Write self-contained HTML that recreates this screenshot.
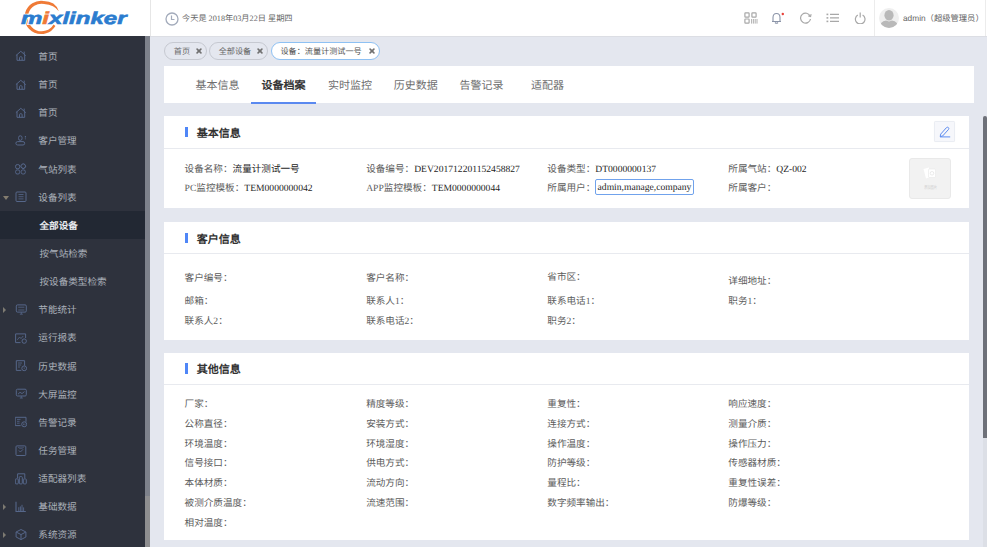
<!DOCTYPE html><html lang="zh-CN"><head><meta charset="utf-8"><style>
*{margin:0;padding:0;box-sizing:border-box}
html,body{width:987px;height:547px;overflow:hidden;background:#e4e7ef;font-family:"Liberation Serif", serif;text-rendering:geometricPrecision}
.a{position:absolute}
.t{position:absolute;white-space:nowrap;line-height:12px}
.side{position:absolute;left:0;top:36px;width:150px;height:511px;background:#2e323d}
.mi{position:absolute;left:0;width:145px;height:28.13px}
.mt{position:absolute;left:38.3px;top:9.5px;font-size:9.6px;line-height:12px;color:#aab0b9;white-space:nowrap}
.ic{position:absolute;left:15.3px;top:8px;width:12px;height:12px}
.arr{position:absolute;left:3px;top:10.5px;width:0;height:0}
.card{position:absolute;left:164px;width:805px;background:#fff}
.ch{position:absolute;left:0;top:0;width:100%;height:32px;border-bottom:1px solid #e8eaef}
.bar{position:absolute;left:21px;top:10.8px;width:3px;height:10.4px;background:#4f86f7}
.ct{position:absolute;left:32.7px;top:11.9px;font-size:11px;line-height:12px;font-weight:bold;color:#333;white-space:nowrap}
.lb{position:absolute;font-size:9.6px;line-height:12px;color:#5c5c5c;white-space:nowrap}
.lb b{font-weight:normal;color:#262626}
.tab{position:absolute;top:79.6px;font-size:11px;line-height:12px;color:#6e6e6e;white-space:nowrap}
.pill{position:absolute;top:41.6px;height:18.3px;border:1px solid #c6c9d1;border-radius:9.5px;font-family:"Liberation Sans", sans-serif;}
.pt{position:absolute;top:3px;font-size:8.15px;line-height:11px;color:#666;white-space:nowrap}
.px{position:absolute;top:3px;font-size:7.6px;line-height:11px;color:#777;font-weight:bold}
</style></head><body>
<div class="a" style="left:0;top:0;width:150px;height:36px;background:#fff"></div>
<svg class="a" style="left:0;top:0" width="150" height="36" viewBox="0 0 150 36">
<path d="M43.9 1.1 A16.6 16.6 0 1 0 55.4 25.9 L53.5 24.5 A13.8 13.8 0 1 1 44 3.9 Z" fill="#ef7a36"/>
<path d="M43.5 1.1 Q55.5 1.2 58.8 11.2 Q54.5 4.8 44 3.9 Z" fill="#ef7a36"/>
<g transform="translate(21,23.6) scale(1,0.86)">
<text x="0" y="0" font-family="Liberation Sans" font-weight="bold" font-style="italic" font-size="20" fill="#fff" stroke="#fff" stroke-width="2.6" textLength="105.5" lengthAdjust="spacingAndGlyphs">mixlinker</text>
<text x="0" y="0" font-family="Liberation Sans" font-weight="bold" font-style="italic" font-size="20" fill="#2b7ccf" stroke="#2b7ccf" stroke-width="0.7" textLength="105.5" lengthAdjust="spacingAndGlyphs">m<tspan fill="#ef7a36" stroke="#ef7a36">i</tspan>xlinker</text>
</g>
</svg>
<div class="side"></div>
<div class="a" style="left:145px;top:36px;width:5px;height:460px;background:#7d818b"></div>
<div class="a" style="left:145px;top:496px;width:5px;height:51px;background:#8e8e90"></div>
<div class="mi" style="top:42.40px;">
<svg class="ic" viewBox="0 0 12 12"><path d="M0.9 5.6 L5.8 1.3 L10.7 5.6 M9.2 1.6 V3.9 M2 4.7 V10.3 H9.7 V4.7 M4.5 10.3 V7.6 Q4.5 6.7 5.8 6.7 Q7.1 6.7 7.1 7.6 V10.3" fill="none" stroke="#56678a" stroke-width="1"/></svg>
<div class="mt" style="">首页</div>
</div>
<div class="mi" style="top:70.55px;">
<svg class="ic" viewBox="0 0 12 12"><path d="M0.9 5.6 L5.8 1.3 L10.7 5.6 M9.2 1.6 V3.9 M2 4.7 V10.3 H9.7 V4.7 M4.5 10.3 V7.6 Q4.5 6.7 5.8 6.7 Q7.1 6.7 7.1 7.6 V10.3" fill="none" stroke="#56678a" stroke-width="1"/></svg>
<div class="mt" style="">首页</div>
</div>
<div class="mi" style="top:98.70px;">
<svg class="ic" viewBox="0 0 12 12"><path d="M0.9 5.6 L5.8 1.3 L10.7 5.6 M9.2 1.6 V3.9 M2 4.7 V10.3 H9.7 V4.7 M4.5 10.3 V7.6 Q4.5 6.7 5.8 6.7 Q7.1 6.7 7.1 7.6 V10.3" fill="none" stroke="#56678a" stroke-width="1"/></svg>
<div class="mt" style="">首页</div>
</div>
<div class="mi" style="top:126.85px;">
<svg class="ic" viewBox="0 0 12 12"><rect x="3.6" y="0.8" width="3.4" height="4.6" rx="1.7" fill="none" stroke="#56678a"/><rect x="0.9" y="6.6" width="8.8" height="3.4" rx="1.7" fill="none" stroke="#56678a"/><path d="M10.4 1 V4.6" stroke="#56678a" stroke-width="1.1" stroke-dasharray="1 0.6"/></svg>
<div class="mt" style="">客户管理</div>
</div>
<div class="mi" style="top:155.00px;">
<svg class="ic" viewBox="0 0 12 12"><rect x="0.6" y="1.6" width="4.1" height="4.1" rx="1.6" fill="none" stroke="#56678a"/><rect x="6.2" y="1.1" width="4.1" height="4.1" rx="1.3" fill="none" stroke="#56678a" transform="rotate(45 8.25 3.15)"/><rect x="0.6" y="6.9" width="4.1" height="4.1" rx="1.6" fill="none" stroke="#56678a"/><rect x="6.2" y="6.9" width="4.1" height="4.1" rx="1.6" fill="none" stroke="#56678a"/></svg>
<div class="mt" style="">气站列表</div>
</div>
<div class="mi" style="top:183.15px;">
<svg class="ic" viewBox="0 0 12 12"><rect x="1" y="1" width="10" height="9.5" rx="1" fill="none" stroke="#56678a"/><path d="M3.5 3.5 H8.5 M3.5 5.7 H8.5 M3.5 7.9 H8.5" stroke="#56678a" stroke-width="0.8"/></svg>
<div class="arr" style="left:2.5px;top:13px;border-left:3.5px solid transparent;border-right:3.5px solid transparent;border-top:4px solid #837c6f"></div>
<div class="mt" style="">设备列表</div>
</div>
<div class="mi" style="top:211.30px;background:#222833;">
<div class="mt" style="color:#e9ebef;font-weight:bold;left:39.5px">全部设备</div>
</div>
<div class="mi" style="top:239.45px;">
<div class="mt" style="left:39.5px">按气站检索</div>
</div>
<div class="mi" style="top:267.60px;">
<div class="mt" style="left:39.5px">按设备类型检索</div>
</div>
<div class="mi" style="top:295.75px;">
<svg class="ic" viewBox="0 0 12 12"><rect x="1.3" y="0.9" width="10" height="7.2" rx="1.2" fill="none" stroke="#56678a"/><path d="M3.2 3.2 H9.4 M3.2 6 H9.4 M6.3 8.2 V10 M4.8 10.2 H7.8" fill="none" stroke="#56678a" stroke-width="0.8"/></svg>
<div class="arr" style="left:3px;top:11.3px;border-top:3.5px solid transparent;border-bottom:3.5px solid transparent;border-left:3.8px solid #7d7a72"></div>
<div class="mt" style="">节能统计</div>
</div>
<div class="mi" style="top:323.90px;">
<svg class="ic" viewBox="0 0 12 12"><path d="M5.5 10.6 H0.6 V1.9 H10.6 V6" fill="none" stroke="#56678a"/><path d="M2.3 7.8 L4.6 5 L6 6.6 L8.2 4" fill="none" stroke="#56678a" stroke-width="0.8"/><circle cx="9.2" cy="9.1" r="2.2" fill="none" stroke="#56678a"/></svg>
<div class="mt" style="">运行报表</div>
</div>
<div class="mi" style="top:352.05px;">
<svg class="ic" viewBox="0 0 12 12"><path d="M6.3 10.4 H1.3 V0.7 H9.6 V5.6" fill="none" stroke="#56678a"/><path d="M3 3 H7 M3 5 H6.2 M3 7 H5" stroke="#56678a" stroke-width="0.8"/><circle cx="9.2" cy="8.3" r="2.4" fill="none" stroke="#56678a"/><path d="M9.2 7.4 V8.9" stroke="#56678a" stroke-width="0.8"/></svg>
<div class="mt" style="">历史数据</div>
</div>
<div class="mi" style="top:380.20px;">
<svg class="ic" viewBox="0 0 12 12"><rect x="1.3" y="1.2" width="10" height="6.8" rx="1.2" fill="none" stroke="#56678a"/><path d="M3 6.2 L5 4.3 L7 5.6 L9.5 3.6 M6.3 8.2 V9.8 M4.8 10 H7.8" fill="none" stroke="#56678a" stroke-width="0.9"/></svg>
<div class="mt" style="">大屏监控</div>
</div>
<div class="mi" style="top:408.35px;">
<svg class="ic" viewBox="0 0 12 12"><path d="M5.6 9.6 H0.2 V1.3 H11 V5.8" fill="none" stroke="#56678a"/><path d="M2 3.4 H5.5 M2 5.3 H4.6 M2 7.2 H4.6" stroke="#56678a" stroke-width="0.8"/><circle cx="9.2" cy="8.3" r="2.5" fill="none" stroke="#56678a"/><path d="M8.5 7.5 V9.1 M9.9 7.5 V9.1" stroke="#56678a" stroke-width="0.7"/></svg>
<div class="mt" style="">告警记录</div>
</div>
<div class="mi" style="top:436.50px;">
<svg class="ic" viewBox="0 0 12 12"><rect x="1" y="0.9" width="9.8" height="9.6" rx="0.9" fill="none" stroke="#56678a"/><path d="M3.4 2.2 L4.2 3.1 H7.6 L8.4 2.2 M3.9 5.5 L5.4 7 L8.1 4.3" fill="none" stroke="#56678a" stroke-width="0.9"/></svg>
<div class="mt" style="">任务管理</div>
</div>
<div class="mi" style="top:464.65px;">
<svg class="ic" viewBox="0 0 12 12"><path d="M2.6 5.2 V0.8 H9.8 V5.2" fill="none" stroke="#56678a"/><rect x="0.3" y="5.9" width="3" height="5" rx="0.8" fill="none" stroke="#56678a"/><rect x="4.3" y="3.6" width="3" height="7.3" rx="0.8" fill="none" stroke="#56678a"/><rect x="8.3" y="5.9" width="3" height="5" rx="0.8" fill="none" stroke="#56678a"/></svg>
<div class="mt" style="">适配器列表</div>
</div>
<div class="mi" style="top:492.80px;">
<svg class="ic" viewBox="0 0 12 12"><path d="M1 0.7 V10.5 H10.8" fill="none" stroke="#56678a" stroke-width="1.1"/><path d="M3.8 10 V6.2 M5.4 10 V5.4 M7 10 V3.8 M8.6 10 V6.4" fill="none" stroke="#56678a" stroke-width="0.9"/></svg>
<div class="arr" style="left:3px;top:11.3px;border-top:3.5px solid transparent;border-bottom:3.5px solid transparent;border-left:3.8px solid #7d7a72"></div>
<div class="mt" style="">基础数据</div>
</div>
<div class="mi" style="top:520.95px;">
<svg class="ic" viewBox="0 0 12 12"><path d="M6 0.5 L10.9 3 V8 L6 10.6 L1.1 8 V3 Z M1.3 3.1 L6 5.6 L10.7 3.1 M6 5.6 V10.4" fill="none" stroke="#56678a" stroke-width="1"/></svg>
<div class="arr" style="left:3px;top:11.3px;border-top:3.5px solid transparent;border-bottom:3.5px solid transparent;border-left:3.8px solid #7d7a72"></div>
<div class="mt" style="">系统资源</div>
</div>
<div class="a" style="left:150px;top:0;width:837px;height:36px;background:#fff;border-left:1px solid #e6e6e6"></div><div class="a" style="left:150px;top:36px;width:837px;height:1px;background:#dcdee4"></div>
<svg class="a" style="left:164.6px;top:11.6px" width="14" height="14" viewBox="0 0 14 14"><circle cx="7" cy="7" r="6" fill="none" stroke="#a3abbb" stroke-width="1.3"/><path d="M6.5 3.5 V7.5 H9.5" fill="none" stroke="#a3abbb" stroke-width="1.2"/></svg>
<div class="t" style="left:182px;top:12.8px;font-size:8.2px;line-height:12px;color:#666">今天是 2018年03月22日 星期四</div>
<svg class="a" style="left:744px;top:12px" width="14" height="12" viewBox="0 0 14 12"><rect x="0.9" y="0.9" width="4.2" height="4.2" rx="0.6" fill="none" stroke="#a8a8a8" stroke-width="1.2"/><rect x="7.9" y="0.9" width="4.2" height="4.2" rx="0.6" fill="none" stroke="#a8a8a8" stroke-width="1.2"/><rect x="0.9" y="7" width="4.2" height="4.2" rx="0.6" fill="none" stroke="#a8a8a8" stroke-width="1.2"/><path d="M7.6 7 V11.6 M9.4 7 V11.6 M11.2 7 V11.6 M13 7 V11.6" stroke="#a8a8a8" stroke-width="0.9"/></svg>
<svg class="a" style="left:770px;top:12px" width="15" height="12" viewBox="0 0 15 12"><path d="M2 9.5 H11 M3 9.5 V5.5 Q3 1.5 6.5 1.5 Q10 1.5 10 5.5 V9.5 M5 10.5 Q6.5 12 8 10.5" fill="none" stroke="#8b94a8" stroke-width="1.1"/><circle cx="12.8" cy="2" r="1.2" fill="#e8413a"/></svg>
<svg class="a" style="left:799px;top:12px" width="14" height="12" viewBox="0 0 14 12"><path d="M11.2 4.2 A5 5 0 1 0 11.5 7" fill="none" stroke="#a8a8a8" stroke-width="1.2"/><path d="M9.3 3.9 L11.6 4.6 L12.1 2.1" fill="none" stroke="#a8a8a8" stroke-width="1.1"/></svg>
<svg class="a" style="left:826px;top:13px" width="14" height="10" viewBox="0 0 14 10"><rect x="0.5" y="0.6" width="1.8" height="1.6" fill="#a8a8a8"/><rect x="0.5" y="4.1" width="1.8" height="1.6" fill="#a8a8a8"/><rect x="0.5" y="7.6" width="1.8" height="1.6" fill="#a8a8a8"/><path d="M4 1.4 H13 M4 4.9 H13 M4 8.4 H13" stroke="#a8a8a8" stroke-width="1.3"/></svg>
<svg class="a" style="left:854px;top:12px" width="13" height="12" viewBox="0 0 13 12"><path d="M3.8 3 A4.8 4.8 0 1 0 8.6 3" fill="none" stroke="#a8a8a8" stroke-width="1.2"/><path d="M6.2 0.5 V5.5" stroke="#a8a8a8" stroke-width="1.2"/></svg>
<div class="a" style="left:874px;top:0;width:1px;height:36px;background:#ececec"></div>
<div class="a" style="left:985px;top:0;width:1px;height:36px;background:#ececec"></div>
<svg class="a" style="left:879px;top:8px" width="20" height="20" viewBox="0 0 20 20"><defs><clipPath id="cc"><circle cx="10" cy="10" r="10"/></clipPath></defs><circle cx="10" cy="10" r="10" fill="#efefef"/><g clip-path="url(#cc)" fill="#b9b9b9"><ellipse cx="10" cy="7.3" rx="4.6" ry="5.3"/><path d="M0.5 20 Q1 13.2 7 12.4 L10 13.5 L13 12.4 Q19 13.2 19.5 20 Z"/></g></svg>
<div class="t" style="left:903px;top:12px;font-family:'Liberation Sans',sans-serif;font-size:8.3px;line-height:12px;color:#666">admin（超级管理员）</div>
<div class="pill" style="left:164.3px;width:42.3px"><span class="pt" style="left:8.5px">首页</span><svg class="a" style="left:30.6px;top:5.6px" width="6" height="6" viewBox="0 0 6 6"><path d="M1.1 1.1 L4.9 4.9 M4.9 1.1 L1.1 4.9" stroke="#707070" stroke-width="1.6" stroke-linecap="round"/></svg></div>
<div class="pill" style="left:209.2px;width:59px"><span class="pt" style="left:8.5px">全部设备</span><svg class="a" style="left:47.1px;top:5.6px" width="6" height="6" viewBox="0 0 6 6"><path d="M1.1 1.1 L4.9 4.9 M4.9 1.1 L1.1 4.9" stroke="#707070" stroke-width="1.6" stroke-linecap="round"/></svg></div>
<div class="pill" style="left:270.6px;width:109.8px;border-color:#8ec1f3;background:#fff"><span class="pt" style="left:8.8px;color:#555">设备：流量计测试一号</span><svg class="a" style="left:97.2px;top:5.6px" width="6" height="6" viewBox="0 0 6 6"><path d="M1.1 1.1 L4.9 4.9 M4.9 1.1 L1.1 4.9" stroke="#707070" stroke-width="1.6" stroke-linecap="round"/></svg></div>
<div class="a" style="left:164px;top:65.6px;width:810px;height:37.7px;background:#fff"></div>
<div class="tab" style="left:195.5px;">基本信息</div>
<div class="tab" style="left:261.6px;color:#353535;font-weight:bold;">设备档案</div>
<div class="tab" style="left:327.9px;">实时监控</div>
<div class="tab" style="left:393.8px;">历史数据</div>
<div class="tab" style="left:459.4px;">告警记录</div>
<div class="tab" style="left:531px;">适配器</div>
<div class="a" style="left:250.7px;top:101.5px;width:65.8px;height:2px;background:#5a89f0"></div>
<div class="a" style="left:982.5px;top:116px;width:4.5px;height:431px;background:#dcdfe6"></div>
<div class="a" style="left:982.5px;top:116px;width:4.5px;height:322px;background:#6e7179;border-radius:2px 2px 0 0"></div>
<div class="card" style="top:116px;height:92px">
<div class="ch" style="height:33px"></div>
<div class="bar"></div>
<div class="ct">基本信息</div>
<div class="lb" style="left:20.60px;top:47.70px">设备名称：<b>流量计测试一号</b></div>
<div class="lb" style="left:202.20px;top:47.70px">设备编号：<b>DEV201712201152458827</b></div>
<div class="lb" style="left:383.30px;top:47.70px">设备类型：<b>DT0000000137</b></div>
<div class="lb" style="left:564.30px;top:47.70px">所属气站：<b>QZ-002</b></div>
<div class="lb" style="left:20.60px;top:67.00px">PC监控模板：<b>TEM0000000042</b></div>
<div class="lb" style="left:202.20px;top:67.00px">APP监控模板：<b>TEM0000000044</b></div>
<div class="lb" style="left:383.30px;top:67.00px">所属用户：</div>
<div class="lb" style="left:564.30px;top:67.00px">所属客户：</div>
<div class="a" style="left:431px;top:63px;width:99px;height:15.6px;border:1px solid #70a2ec;border-radius:2px;font-size:9.6px;line-height:15.2px;color:#262626;padding-left:1.6px;white-space:nowrap">admin,manage,company</div>
<div class="a" style="left:770px;top:4.8px;width:21px;height:21px;border:1px solid #eaedf3;background:#f6f7fb;border-radius:1.5px;box-shadow:0 0 1px rgba(0,0,0,0.06)"></div>
<svg class="a" style="left:775px;top:9.5px" width="12" height="12" viewBox="0 0 12 12"><path d="M1.2 10.6 L1.7 8.1 L7.4 1.7 Q8.4 0.7 9.4 1.6 Q10.3 2.6 9.4 3.6 L3.6 10 Z" fill="none" stroke="#5d8cf0" stroke-width="1"/><path d="M1 10.9 H11.2" stroke="#5d8cf0" stroke-width="1"/></svg>
<div class="a" style="left:745px;top:42px;width:42px;height:41px;border:1px solid #e9e9e9;background:#f2f2f2;border-radius:3px"></div>
<svg class="a" style="left:758px;top:50px" width="16" height="14" viewBox="0 0 16 14"><path d="M1.5 3 L7 1.5 L8.5 11 L4 12.5 Z" fill="#fff"/><rect x="6.5" y="3" width="7" height="8.5" rx="1" fill="#fff" stroke="#e8e8e8" stroke-width="0.6"/><circle cx="10" cy="7.3" r="1.8" fill="none" stroke="#e2e2e2" stroke-width="0.7"/></svg>
<div class="a" style="left:760px;top:68.6px;font-size:5px;line-height:6px;color:#d2d2d2;font-family:Liberation Sans;transform:scaleX(0.65);transform-origin:0 0;white-space:nowrap">添加图片</div>
</div>
<div class="card" style="top:222px;height:117.5px">
<div class="ch" style="height:32.19999999999999px"></div>
<div class="bar"></div>
<div class="ct">客户信息</div>
<div class="lb" style="left:20.60px;top:50.50px">客户编号：</div>
<div class="lb" style="left:202.20px;top:50.50px">客户名称：</div>
<div class="lb" style="left:383.30px;top:49.90px">省市区：</div>
<div class="lb" style="left:564.30px;top:53.50px">详细地址：</div>
<div class="lb" style="left:20.60px;top:73.60px">邮箱：</div>
<div class="lb" style="left:202.20px;top:73.60px">联系人1：</div>
<div class="lb" style="left:383.30px;top:73.60px">联系电话1：</div>
<div class="lb" style="left:564.30px;top:73.60px">职务1：</div>
<div class="lb" style="left:20.60px;top:93.50px">联系人2：</div>
<div class="lb" style="left:202.20px;top:93.50px">联系电话2：</div>
<div class="lb" style="left:383.30px;top:93.50px">职务2：</div>

</div>
<div class="card" style="top:352.5px;height:187.89999999999998px">
<div class="ch" style="height:32.69999999999999px"></div>
<div class="bar"></div>
<div class="ct">其他信息</div>
<div class="lb" style="left:20.60px;top:46.80px">厂家：</div>
<div class="lb" style="left:202.20px;top:46.80px">精度等级：</div>
<div class="lb" style="left:383.30px;top:46.80px">重复性：</div>
<div class="lb" style="left:564.30px;top:46.80px">响应速度：</div>
<div class="lb" style="left:20.60px;top:66.60px">公称直径：</div>
<div class="lb" style="left:202.20px;top:66.60px">安装方式：</div>
<div class="lb" style="left:383.30px;top:66.60px">连接方式：</div>
<div class="lb" style="left:564.30px;top:66.60px">测量介质：</div>
<div class="lb" style="left:20.60px;top:86.30px">环境温度：</div>
<div class="lb" style="left:202.20px;top:86.30px">环境湿度：</div>
<div class="lb" style="left:383.30px;top:86.30px">操作温度：</div>
<div class="lb" style="left:564.30px;top:86.30px">操作压力：</div>
<div class="lb" style="left:20.60px;top:105.80px">信号接口：</div>
<div class="lb" style="left:202.20px;top:105.80px">供电方式：</div>
<div class="lb" style="left:383.30px;top:105.80px">防护等级：</div>
<div class="lb" style="left:564.30px;top:105.80px">传感器材质：</div>
<div class="lb" style="left:20.60px;top:125.50px">本体材质：</div>
<div class="lb" style="left:202.20px;top:125.50px">流动方向：</div>
<div class="lb" style="left:383.30px;top:125.50px">量程比：</div>
<div class="lb" style="left:564.30px;top:125.50px">重复性误差：</div>
<div class="lb" style="left:20.60px;top:145.20px">被测介质温度：</div>
<div class="lb" style="left:202.20px;top:145.20px">流速范围：</div>
<div class="lb" style="left:383.30px;top:145.20px">数字频率输出：</div>
<div class="lb" style="left:564.30px;top:145.20px">防爆等级：</div>
<div class="lb" style="left:20.60px;top:165.00px">相对温度：</div>

</div>
</body></html>
